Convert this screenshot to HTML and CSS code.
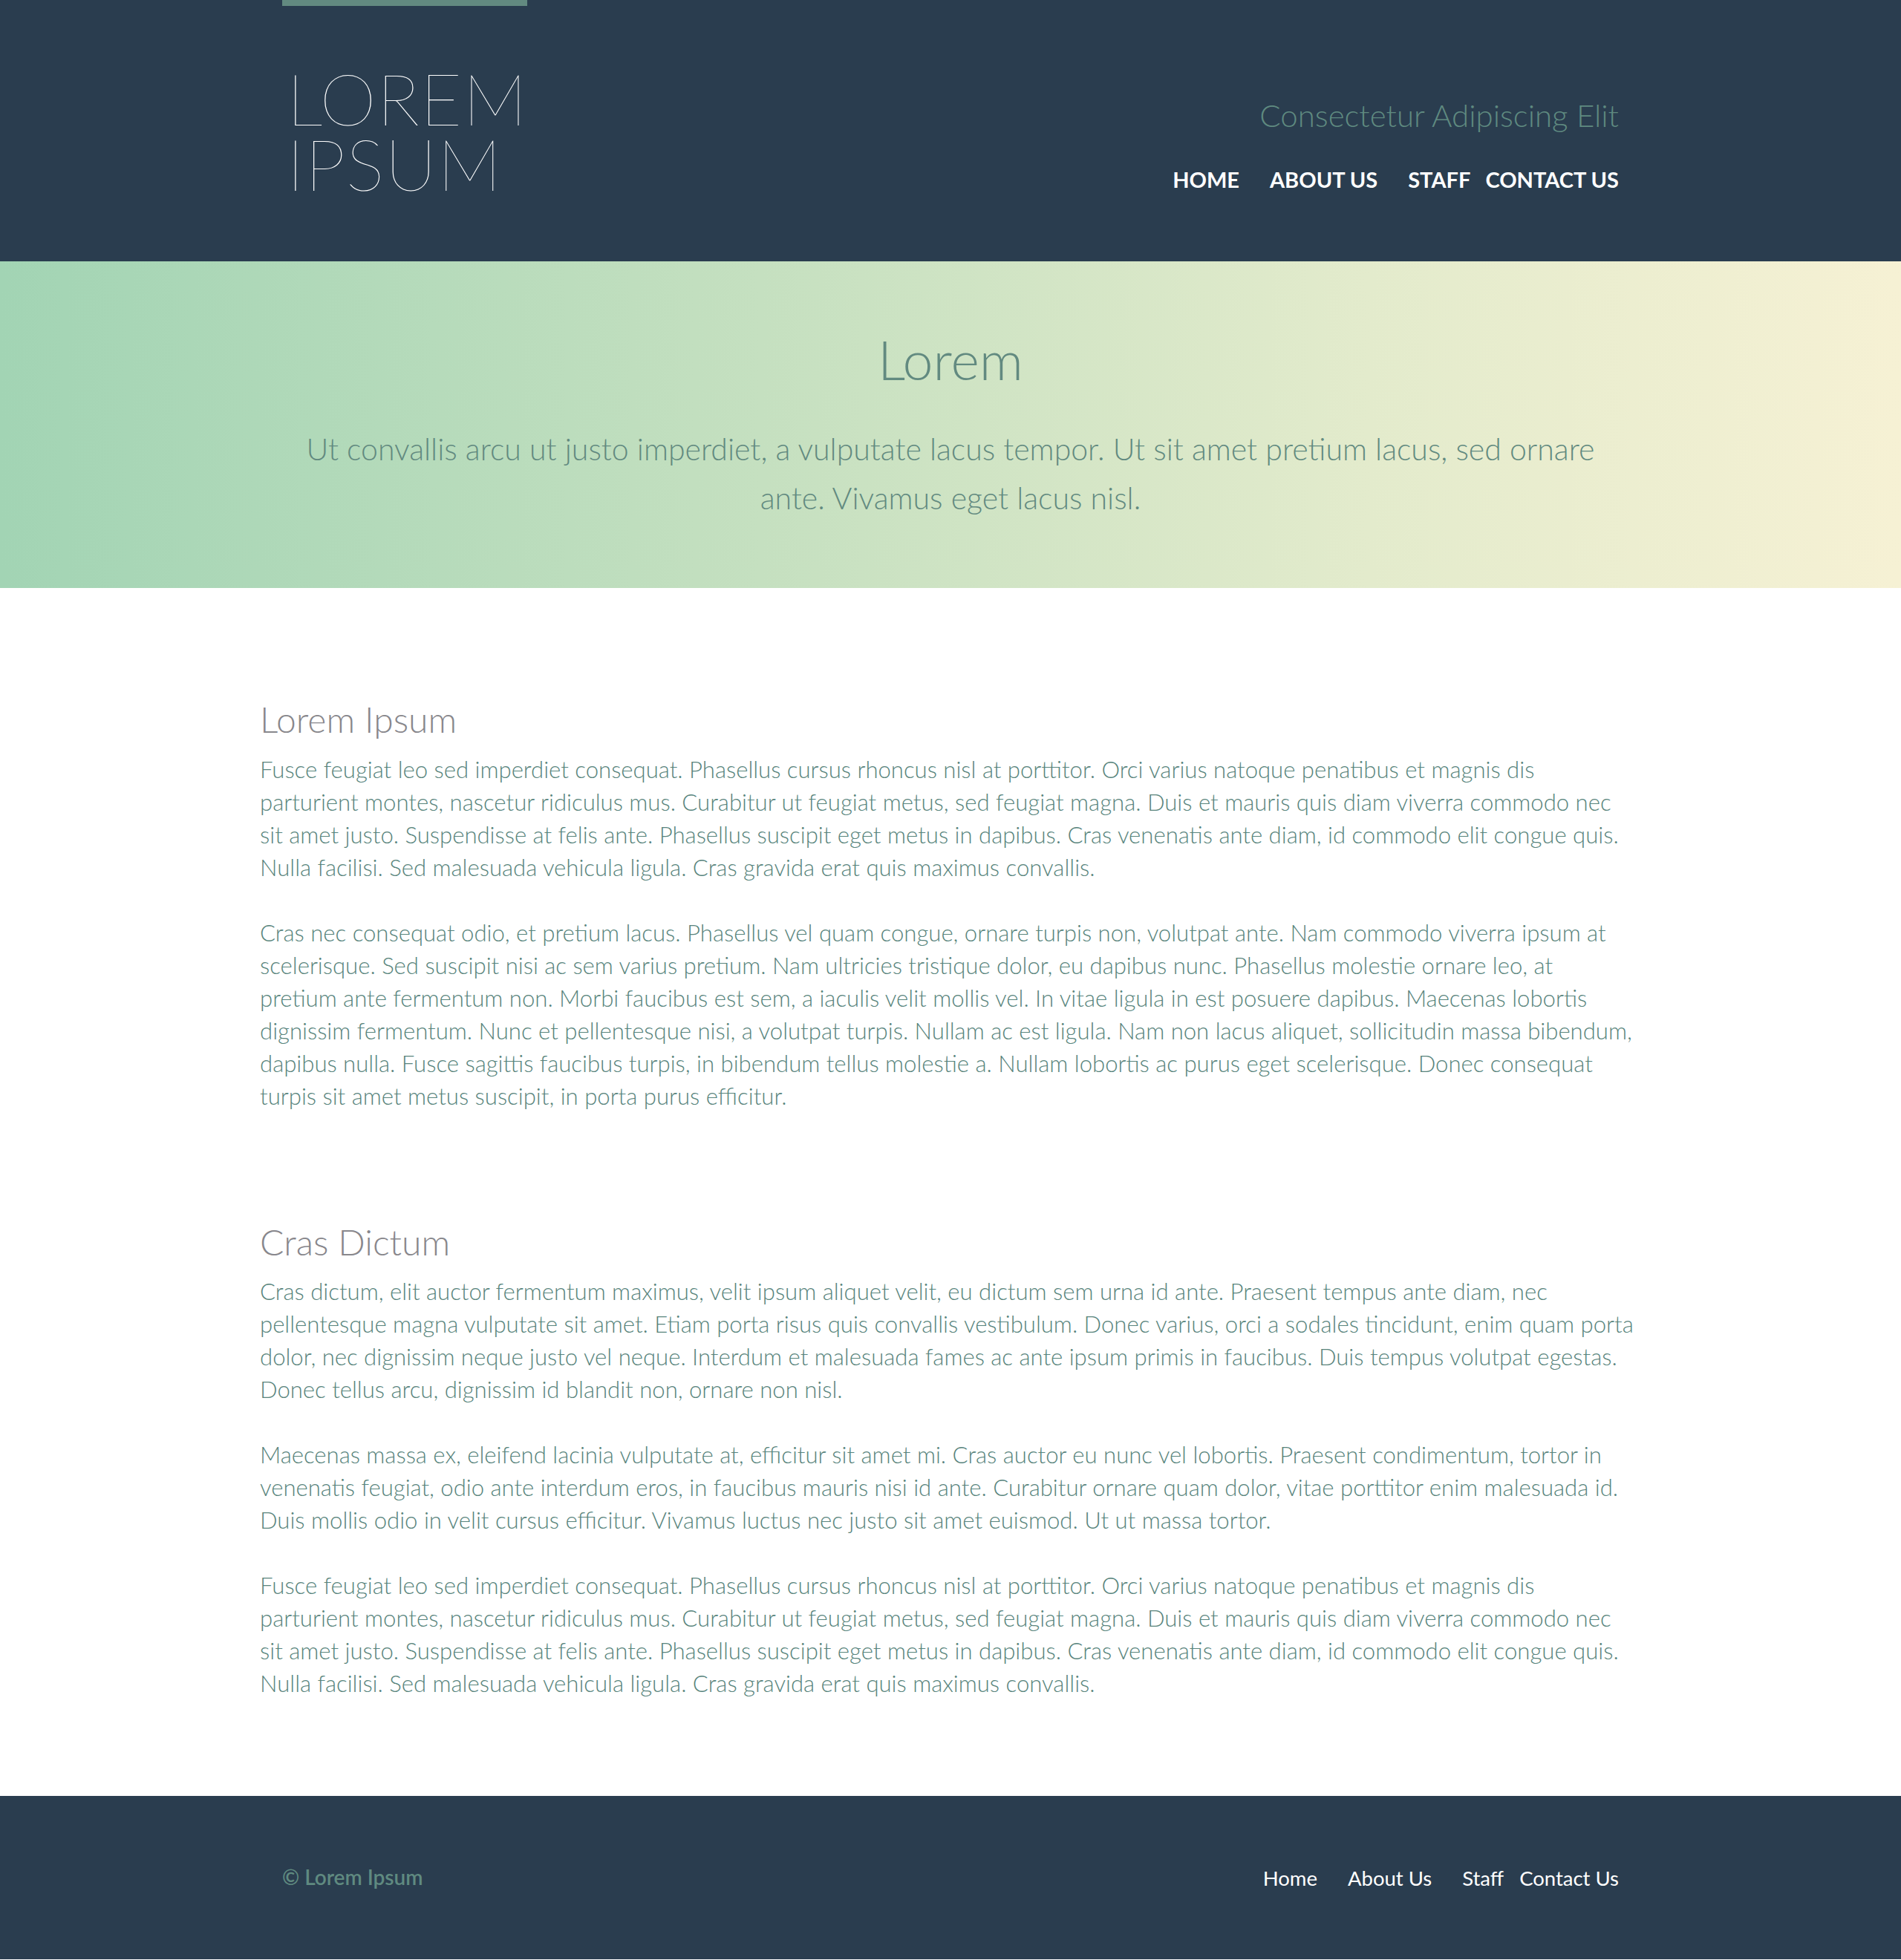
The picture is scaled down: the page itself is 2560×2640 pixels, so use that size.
FILE: index.html
```html
<!DOCTYPE html>
<html lang="en">
<head>
<meta charset="utf-8">
<title>Lorem Ipsum</title>
<link rel="stylesheet" href="styles.css">
</head>
<body>
<header class="site-header">
  <div class="header-inner">
    <div class="brand">
      <div class="logo">LOREM<br>IPSUM</div>
    </div>
    <div class="header-right">
      <div class="tagline">Consectetur Adipiscing Elit</div>
      <nav class="main-nav">
        <a href="#" class="nav-link">HOME</a>
        <a href="#" class="nav-link">ABOUT US</a>
        <a href="#" class="nav-link">STAFF</a>
        <a href="#" class="nav-link nav-last">CONTACT US</a>
      </nav>
    </div>
  </div>
</header>

<section class="hero">
  <h1 class="hero-title">Lorem</h1>
  <p class="hero-text">Ut convallis arcu ut justo imperdiet, a vulputate lacus tempor. Ut sit amet pretium lacus, sed ornare ante. Vivamus eget lacus nisl.</p>
</section>

<main class="content">
  <section class="article">
    <h2 class="article-title">Lorem Ipsum</h2>
    <p>Fusce feugiat leo sed imperdiet consequat. Phasellus cursus rhoncus nisl at porttitor. Orci varius natoque penatibus et magnis dis parturient montes, nascetur ridiculus mus. Curabitur ut feugiat metus, sed feugiat magna. Duis et mauris quis diam viverra commodo nec sit amet justo. Suspendisse at felis ante. Phasellus suscipit eget metus in dapibus. Cras venenatis ante diam, id commodo elit congue quis. Nulla facilisi. Sed malesuada vehicula ligula. Cras gravida erat quis maximus convallis.</p>
    <p>Cras nec consequat odio, et pretium lacus. Phasellus vel quam congue, ornare turpis non, volutpat ante. Nam commodo viverra ipsum at scelerisque. Sed suscipit nisi ac sem varius pretium. Nam ultricies tristique dolor, eu dapibus nunc. Phasellus molestie ornare leo, at pretium ante fermentum non. Morbi faucibus est sem, a iaculis velit mollis vel. In vitae ligula in est posuere dapibus. Maecenas lobortis dignissim fermentum. Nunc et pellentesque nisi, a volutpat turpis. Nullam ac est ligula. Nam non lacus aliquet, sollicitudin massa bibendum, dapibus nulla. Fusce sagittis faucibus turpis, in bibendum tellus molestie a. Nullam lobortis ac purus eget scelerisque. Donec consequat turpis sit amet metus suscipit, in porta purus efficitur.</p>
  </section>
  <section class="article">
    <h2 class="article-title">Cras Dictum</h2>
    <p>Cras dictum, elit auctor fermentum maximus, velit ipsum aliquet velit, eu dictum sem urna id ante. Praesent tempus ante diam, nec pellentesque magna vulputate sit amet. Etiam porta risus quis convallis vestibulum. Donec varius, orci a sodales tincidunt, enim quam porta dolor, nec dignissim neque justo vel neque. Interdum et malesuada fames ac ante ipsum primis in faucibus. Duis tempus volutpat egestas. Donec tellus arcu, dignissim id blandit non, ornare non nisl.</p>
    <p>Maecenas massa ex, eleifend lacinia vulputate at, efficitur sit amet mi. Cras auctor eu nunc vel lobortis. Praesent condimentum, tortor in venenatis feugiat, odio ante interdum eros, in faucibus mauris nisi id ante. Curabitur ornare quam dolor, vitae porttitor enim malesuada id. Duis mollis odio in velit cursus efficitur. Vivamus luctus nec justo sit amet euismod. Ut ut massa tortor.</p>
    <p>Fusce feugiat leo sed imperdiet consequat. Phasellus cursus rhoncus nisl at porttitor. Orci varius natoque penatibus et magnis dis parturient montes, nascetur ridiculus mus. Curabitur ut feugiat metus, sed feugiat magna. Duis et mauris quis diam viverra commodo nec sit amet justo. Suspendisse at felis ante. Phasellus suscipit eget metus in dapibus. Cras venenatis ante diam, id commodo elit congue quis. Nulla facilisi. Sed malesuada vehicula ligula. Cras gravida erat quis maximus convallis.</p>
  </section>
</main>

<footer class="site-footer">
  <div class="footer-inner">
    <div class="copyright">© Lorem Ipsum</div>
    <nav class="footer-nav">
      <a href="#" class="footer-link">Home</a>
      <a href="#" class="footer-link">About Us</a>
      <a href="#" class="footer-link">Staff</a>
      <a href="#" class="footer-link footer-last">Contact Us</a>
    </nav>
  </div>
</footer>
</body>
</html>
```

FILE: styles.css
```css
* {
  box-sizing: border-box;
}

html, body {
  margin: 0;
  padding: 0;
}

body {
  font-family: Lato, "Open Sans", "Liberation Sans", sans-serif;
  background: #ffffff;
  color: #5f8a82;
}

a {
  text-decoration: none;
}

/* Header */
.site-header {
  background: #2a3d4f;
  height: 352px;
}

.header-inner {
  width: 1800px;
  margin: 0 auto;
  display: flex;
  justify-content: space-between;
  align-items: flex-start;
}

.brand {
  width: 330px;
  border-top: 8px solid #628a80;
  padding-top: 80px;
}

.logo {
  font-size: 97px;
  line-height: 88px;
  font-weight: 200;
  color: #ffffff;
  padding-left: 6px;
  letter-spacing: 1px;
}

.header-right {
  display: flex;
  flex-direction: column;
  align-items: flex-end;
  padding-top: 130px;
}

.tagline {
  font-size: 42px;
  line-height: 1.2;
  font-weight: 300;
  color: #5f8a80;
}

.main-nav {
  display: flex;
  margin-top: 45px;
}

.nav-link {
  font-size: 29px;
  line-height: 1.2;
  font-weight: 700;
  color: #ffffff;
  margin-left: 41px;
}

.nav-link.nav-last {
  margin-left: 20px;
}

/* Hero */
.hero {
  height: 440px;
  background: linear-gradient(to right, #a2d4b4 0%, #c5e0c0 40%, #e3ebcc 72%, #f6f1d4 100%);
  padding-top: 88px;
  text-align: center;
}

.hero-title {
  margin: 0;
  font-size: 73.5px;
  line-height: 1.2;
  font-weight: 300;
  color: #628a80;
}

.hero-text {
  width: 1800px;
  margin: 44px auto 0;
  font-size: 41px;
  line-height: 66px;
  font-weight: 300;
  color: #628a80;
}

/* Content */
.content {
  width: 1860px;
  margin: 0 auto;
  padding: 148px 0 130px;
  display: flex;
  flex-direction: column;
  gap: 146px;
}

.article {
  width: 1853px;
}

.article-title {
  margin: 0 0 16px;
  font-size: 48px;
  line-height: 1.2;
  font-weight: 300;
  color: #88878c;
}

.article p {
  margin: 0 0 44px;
  font-size: 31.1px;
  line-height: 44px;
  font-weight: 300;
  color: #58847c;
}

.article p:last-child {
  margin-bottom: 0;
}

/* Footer */
.site-footer {
  background: #2a3d4f;
  height: 220px;
}

.footer-inner {
  width: 1800px;
  height: 100%;
  margin: 0 auto;
  display: flex;
  justify-content: space-between;
  align-items: center;
}

.copyright {
  font-size: 28px;
  line-height: 1.2;
  font-weight: 600;
  color: #5f8a80;
}

.footer-nav {
  display: flex;
}

.footer-link {
  font-size: 27.5px;
  line-height: 1.2;
  font-weight: 400;
  color: #ffffff;
  margin-left: 41px;
}

.footer-link.footer-last {
  margin-left: 21px;
}
```
